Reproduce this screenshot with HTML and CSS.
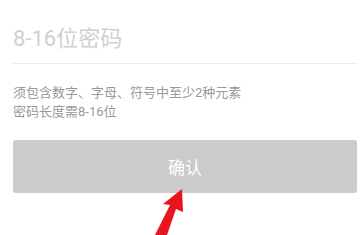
FILE: index.html
```html
<!DOCTYPE html>
<html lang="zh-CN">
<head>
    <meta charset="UTF-8">
    <meta name="viewport" content="width=device-width, initial-scale=1.0">
    <title>设置密码</title>
    <link rel="stylesheet" href="styles.css">
</head>
<body>
    <div class="page">
        <div class="field">
            <div class="placeholder">8-16位密码</div>
        </div>

        <div class="hint">
            <p>须包含数字、字母、符号中至少2种元素</p>
            <p>密码长度需8-16位</p>
        </div>

        <button class="confirm-btn" type="button">确认</button>

        <svg class="arrow" width="40" height="50" viewBox="0 0 40 50">
            <polygon points="27,4 28,27 21,24 12,50 0,50 15,20 8,19" fill="#e8141e"/>
        </svg>
    </div>
</body>
</html>
```

FILE: styles.css
```css
body {
    margin: 0;
    padding: 0;
    background-color: #fff;
    font-family: Roboto, "Noto Sans CJK SC", sans-serif;
}

.page {
    position: relative;
    height: 235px;
    padding: 0 3px 0 13px;
    overflow: hidden;
}

.field {
    padding-top: 24px;
    padding-bottom: 9px;
    border-bottom: 1px solid #ebebeb;
}

.placeholder {
    font-size: 22px;
    line-height: 30px;
    color: #d0d0d0;
}

.hint {
    margin-top: 19px;
    font-size: 13px;
    line-height: 19px;
    color: #999;
}

.hint p {
    margin: 0;
}

.confirm-btn {
    display: block;
    width: 100%;
    height: 53px;
    margin-top: 19px;
    border: none;
    border-radius: 3px;
    background-color: #cbcbcb;
    color: #fff;
    font-family: inherit;
    font-size: 17px;
}

.arrow {
    position: absolute;
    left: 155px;
    top: 185px;
}
```
